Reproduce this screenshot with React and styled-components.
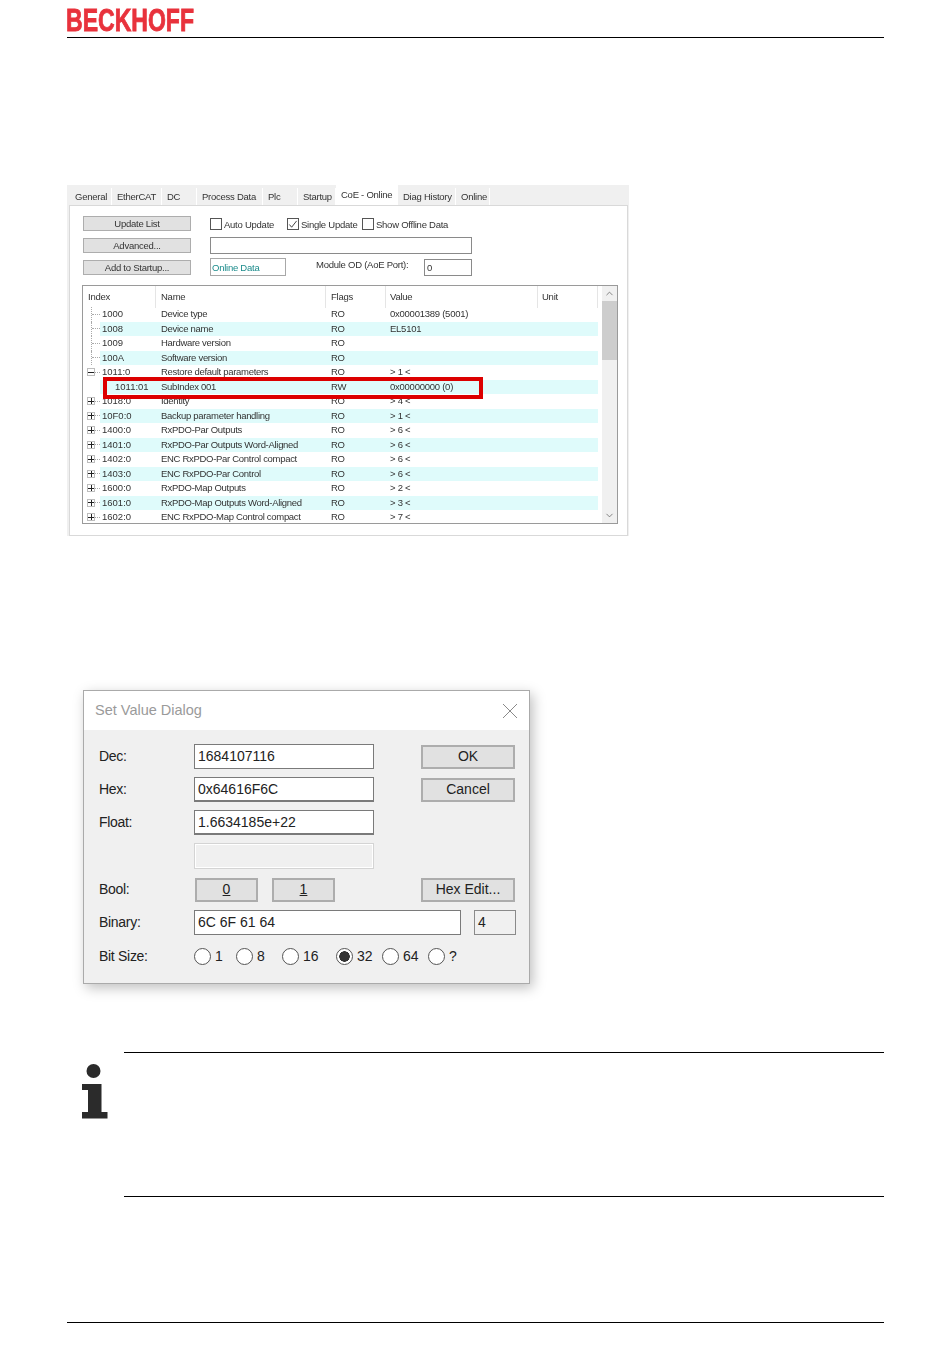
import React from "react";
import styled, { createGlobalStyle } from "styled-components";
import { ChevronUp, ChevronDown } from "lucide-react";

const TABS = [
  { label: "General", width: 42 },
  { label: "EtherCAT", width: 50 },
  { label: "DC", width: 35 },
  { label: "Process Data", width: 66 },
  { label: "Plc", width: 35 },
  { label: "Startup", width: 38 },
  { label: "CoE - Online", width: 62, active: true },
  { label: "Diag History", width: 58 },
  { label: "Online", width: 34 },
];

const OBJECTS = [
  { index: "1000", name: "Device type", flags: "RO", value: "0x00001389 (5001)" },
  { index: "1008", name: "Device name", flags: "RO", value: "EL5101" },
  { index: "1009", name: "Hardware version", flags: "RO", value: "" },
  { index: "100A", name: "Software version", flags: "RO", value: "" },
  { index: "1011:0", name: "Restore default parameters", flags: "RO", value: "> 1 <", node: "minus" },
  { index: "1011:01", name: "SubIndex 001", flags: "RW", value: "0x00000000 (0)", sub: true },
  { index: "1018:0", name: "Identity", flags: "RO", value: "> 4 <", node: "plus" },
  { index: "10F0:0", name: "Backup parameter handling", flags: "RO", value: "> 1 <", node: "plus" },
  { index: "1400:0", name: "RxPDO-Par Outputs", flags: "RO", value: "> 6 <", node: "plus" },
  { index: "1401:0", name: "RxPDO-Par Outputs Word-Aligned", flags: "RO", value: "> 6 <", node: "plus" },
  { index: "1402:0", name: "ENC RxPDO-Par Control compact", flags: "RO", value: "> 6 <", node: "plus" },
  { index: "1403:0", name: "ENC RxPDO-Par Control", flags: "RO", value: "> 6 <", node: "plus" },
  { index: "1600:0", name: "RxPDO-Map Outputs", flags: "RO", value: "> 2 <", node: "plus" },
  { index: "1601:0", name: "RxPDO-Map Outputs Word-Aligned", flags: "RO", value: "> 3 <", node: "plus" },
  { index: "1602:0", name: "ENC RxPDO-Map Control compact", flags: "RO", value: "> 7 <", node: "plus" },
];

const BIT_SIZES = [
  { label: "1", width: 42 },
  { label: "8", width: 46 },
  { label: "16", width: 54 },
  { label: "32", width: 46, checked: true },
  { label: "64", width: 46 },
  { label: "?", width: 30 },
];

const InfoIcon = () => (
  <svg width="26" height="55" viewBox="0 0 26 55" fill="#2b2b2b">
    <circle cx="11.500" cy="7" r="7" />
    <path d="M0 20H19.500V48H25.500V54.500H0V48H6V26H0Z" />
  </svg>
);

const CloseIcon = () => (
  <svg width="16" height="16" viewBox="0 0 16 16" stroke="#8a8a8a" strokeWidth="1" fill="none">
    <path d="M1 1L15 15M15 1L1 15" />
  </svg>
);

const App = () => {
  return (
    <Page>
      <GlobalStyle />
      <Header>
        <Logo>BECKHOFF</Logo>
      </Header>

      <CoePanel>
        <TabStrip>
          {TABS.map((tab) => (
            <Tab key={tab.label} $active={tab.active} $width={tab.width}>
              {tab.label}
            </Tab>
          ))}
        </TabStrip>
        <TabBody>
          <FormGrid>
            <FlatButton>Update List</FlatButton>
            <CheckRow>
              <CheckItem $width={77}>
                <CheckBox />
                Auto Update
              </CheckItem>
              <CheckItem $width={75}>
                <CheckBox>
                  <svg width="11" height="11" viewBox="0 0 11 11" fill="none" stroke="#333" strokeWidth="1">
                    <path d="M1.500 5.500L4 8.500L9.500 1.500" />
                  </svg>
                </CheckBox>
                Single Update
              </CheckItem>
              <CheckItem $width={110}>
                <CheckBox />
                Show Offline Data
              </CheckItem>
            </CheckRow>
            <FlatButton>Advanced...</FlatButton>
            <EditBox />
            <FlatButton>Add to Startup...</FlatButton>
            <DataRow>
              <OnlineData>Online Data</OnlineData>
              <ModuleLabel>Module OD (AoE Port):</ModuleLabel>
              <PortBox>0</PortBox>
            </DataRow>
          </FormGrid>

          <ListBox>
            <ListMain>
              <HeaderRow>
                <HeadCell>Index</HeadCell>
                <HeadCell>Name</HeadCell>
                <HeadCell>Flags</HeadCell>
                <HeadCell>Value</HeadCell>
                <HeadCell>Unit</HeadCell>
              </HeaderRow>
              <RowList>
                {OBJECTS.map((row, i) => (
                  <ObjectRow key={row.index}>
                    <TreeGutter>
                      {row.node ? <NodeBox $open={row.node === "minus"} /> : !row.sub && <TreeStem />}
                      {!row.sub && <TreeDots />}
                    </TreeGutter>
                    <RowBody $striped={i % 2 === 1}>
                      <IndexCell $sub={row.sub}>{row.index}</IndexCell>
                      <span>{row.name}</span>
                      <span>{row.flags}</span>
                      <span>{row.value}</span>
                    </RowBody>
                  </ObjectRow>
                ))}
              </RowList>
            </ListMain>
            <ScrollBar>
              <ScrollArrow>
                <ChevronUp size={11} strokeWidth={1.5} />
              </ScrollArrow>
              <ScrollThumb />
              <ScrollTrack />
              <ScrollArrow>
                <ChevronDown size={11} strokeWidth={1.5} />
              </ScrollArrow>
            </ScrollBar>
            <Highlight />
          </ListBox>
        </TabBody>
      </CoePanel>

      <Dialog>
        <TitleBar>
          <DialogTitle>Set Value Dialog</DialogTitle>
          <CloseIcon />
        </TitleBar>
        <DialogBody>
          <FieldLabel>Dec:</FieldLabel>
          <Field>1684107116</Field>
          <DialogButton>OK</DialogButton>

          <FieldLabel>Hex:</FieldLabel>
          <Field $heavy>0x64616F6C</Field>
          <DialogButton>Cancel</DialogButton>

          <FieldLabel>Float:</FieldLabel>
          <Field $heavy>1.6634185e+22</Field>
          <span />

          <span />
          <DisabledField />
          <span />

          <FieldLabel>Bool:</FieldLabel>
          <BoolGroup>
            <BoolButton>
              <u>0</u>
            </BoolButton>
            <BoolButton>
              <u>1</u>
            </BoolButton>
          </BoolGroup>
          <DialogButton>Hex Edit...</DialogButton>

          <FieldLabel>Binary:</FieldLabel>
          <BinaryGroup>
            <Field>6C 6F 61 64</Field>
            <SizeBox>4</SizeBox>
          </BinaryGroup>

          <FieldLabel>Bit Size:</FieldLabel>
          <RadioRow>
            {BIT_SIZES.map((size) => (
              <RadioItem key={size.label} $width={size.width}>
                <Radio $checked={size.checked} />
                {size.label}
              </RadioItem>
            ))}
          </RadioRow>
        </DialogBody>
      </Dialog>

      <Note>
        <NoteIcon>
          <InfoIcon />
        </NoteIcon>
        <NoteBody />
      </Note>

      <Footer />
    </Page>
  );
};

const GlobalStyle = createGlobalStyle`
  html, body {
    margin: 0;
    background: #fff;
  }
`;

const Page = styled.div`
  width: 950px;
  height: 1369px;
  box-sizing: border-box;
  padding: 0 66px 0 67px;
  overflow: hidden;
  font-family: "Liberation Sans", Arial, sans-serif;
`;

const Header = styled.header`
  height: 37px;
  border-bottom: 1px solid #000;
  overflow: hidden;
`;

const Logo = styled.div`
  display: inline-block;
  margin-left: -1px;
  font-size: 32px;
  line-height: 41px;
  font-weight: 700;
  color: #e8323c;
  -webkit-text-stroke: 0.9px #e8323c;
  transform: scaleX(0.72);
  transform-origin: left center;
`;

const CoePanel = styled.section`
  width: 562px;
  height: 351px;
  margin-top: 147px;
  box-sizing: border-box;
  padding: 0 1px 0 2px;
  background: #f0f0f0;
  display: flex;
  flex-direction: column;
  font-size: 9.500px;
  letter-spacing: -0.25px;
  color: #333;
  filter: blur(0.3px);
`;

const TabStrip = styled.div`
  height: 20px;
  display: flex;
  align-items: flex-end;
  padding-left: 1px;
`;

const Tab = styled.div`
  width: ${(p) => p.$width}px;
  height: ${(p) => (p.$active ? 20 : 17)}px;
  line-height: ${(p) => (p.$active ? 19 : 17)}px;
  padding-left: 5px;
  white-space: nowrap;
  background: ${(p) => (p.$active ? "#fff" : "#f0f0f0")};
  border-right: 1px solid #fff;
  box-sizing: border-box;
`;

const TabBody = styled.div`
  flex: 1;
  background: #fff;
  border: 1px solid #d9d9d9;
  padding: 9px 9px 11px 13px;
  display: flex;
  flex-direction: column;
  gap: 10px;
`;

const FormGrid = styled.div`
  display: grid;
  grid-template-columns: 108px 262px;
  grid-auto-rows: 16px;
  column-gap: 19px;
  row-gap: 6px;
  align-items: center;
`;

const FlatButton = styled.div`
  height: 15px;
  line-height: 14px;
  box-sizing: border-box;
  background: #e1e1e1;
  border: 1px solid #adadad;
  text-align: center;
`;

const CheckRow = styled.div`
  display: flex;
  align-items: center;
  padding-top: 2px;
`;

const CheckItem = styled.div`
  width: ${(p) => p.$width}px;
  display: flex;
  align-items: center;
  gap: 2px;
  white-space: nowrap;
`;

const CheckBox = styled.span`
  width: 12px;
  height: 12px;
  box-sizing: border-box;
  border: 1px solid #555;
  display: inline-flex;
  align-items: center;
  justify-content: center;
  flex: none;
`;

const EditBox = styled.div`
  height: 17px;
  box-sizing: border-box;
  border: 1px solid #8a8a8a;
`;

const DataRow = styled.div`
  display: flex;
  align-items: center;
  height: 18px;
`;

const OnlineData = styled.div`
  width: 76px;
  height: 18px;
  line-height: 17px;
  box-sizing: border-box;
  border: 1px solid #a8a8a8;
  padding-left: 1px;
  color: #1c8c8c;
`;

const ModuleLabel = styled.div`
  margin-left: 30px;
  width: 108px;
  margin-top: -5px;
  white-space: nowrap;
`;

const PortBox = styled.div`
  width: 48px;
  height: 17px;
  line-height: 16px;
  box-sizing: border-box;
  border: 1px solid #8a8a8a;
  padding-left: 2px;
`;

const ListBox = styled.div`
  position: relative;
  width: 536px;
  height: 239px;
  margin-left: -1px;
  box-sizing: border-box;
  border: 1px solid #9a9a9a;
  display: flex;
  overflow: hidden;
`;

const ListMain = styled.div`
  width: 515px;
  flex: none;
  display: flex;
  flex-direction: column;
`;

const HeaderRow = styled.div`
  height: 21px;
  flex: none;
  display: grid;
  grid-template-columns: 73px 170px 60px 152px 60px;
  align-items: stretch;
`;

const HeadCell = styled.div`
  line-height: 22px;
  padding-left: 5px;
  border-right: 1px solid #e5e5e5;
  &:nth-child(n + 4) {
    padding-left: 4px;
  }
`;

const RowList = styled.div`
  flex: 1;
  overflow: hidden;
`;

const ObjectRow = styled.div`
  height: 14.500px;
  display: flex;
`;

const TreeGutter = styled.div`
  width: 17px;
  flex: none;
  display: flex;
  align-items: center;
  padding-left: 4px;
  box-sizing: border-box;
`;

const NodeBox = styled.span`
  width: 8px;
  height: 8px;
  flex: none;
  box-sizing: border-box;
  border: 1px solid #bdbdbd;
  background:
    linear-gradient(#222, #222) center / 6px 1px no-repeat,
    ${(p) => (p.$open ? "none" : "linear-gradient(#222, #222) center / 1px 6px no-repeat")};
`;

const TreeStem = styled.span`
  align-self: stretch;
  margin-left: 4px;
  width: 0;
  border-left: 1px dotted #aaa;
`;

const TreeDots = styled.span`
  flex: 1;
  border-top: 1px dotted #aaa;
`;

const RowBody = styled.div`
  width: 498px;
  display: grid;
  grid-template-columns: 56px 170px 59px 213px;
  align-items: center;
  white-space: nowrap;
  line-height: 14px;
  background: ${(p) => (p.$striped ? "#dffbfb" : "transparent")};
  span:nth-child(n + 2) {
    padding-left: 5px;
  }
  span:nth-child(2) {
    letter-spacing: -0.3px;
  }
`;

const IndexCell = styled.span`
  padding-left: ${(p) => (p.$sub ? 15 : 2)}px;
  letter-spacing: 0;
`;

const ScrollBar = styled.div`
  width: 15px;
  margin-left: 4px;
  flex: none;
  background: #f0f0f0;
  display: flex;
  flex-direction: column;
`;

const ScrollArrow = styled.div`
  height: 15px;
  flex: none;
  display: flex;
  align-items: center;
  justify-content: center;
  color: #555;
`;

const ScrollThumb = styled.div`
  height: 59px;
  flex: none;
  background: #cdcdcd;
`;

const ScrollTrack = styled.div`
  flex: 1;
`;

const Highlight = styled.div`
  position: absolute;
  left: 20px;
  top: 91px;
  width: 380px;
  height: 22px;
  box-sizing: border-box;
  border: 4px solid #dc0000;
`;

const Dialog = styled.section`
  width: 447px;
  margin: 154px 0 0 16px;
  box-sizing: border-box;
  border: 1px solid #aaa;
  background: #f0f0f0;
  box-shadow: 3px 4px 12px rgba(0, 0, 0, 0.25);
  font-size: 14px;
  color: #222;
`;

const TitleBar = styled.div`
  height: 39px;
  background: #fff;
  display: flex;
  align-items: center;
  justify-content: space-between;
  padding: 0 11px;
`;

const DialogTitle = styled.div`
  font-size: 14.500px;
  color: #9a9a9a;
  margin-top: -2px;
`;

const DialogBody = styled.div`
  display: grid;
  grid-template-columns: 95px 180px 141px;
  grid-template-rows: 25px 25px 25px 26px 25px 25px 28px;
  row-gap: 8px;
  padding: 14px 14px 12px 15px;
  align-items: center;
`;

const FieldLabel = styled.div`
  letter-spacing: -0.3px;
  white-space: nowrap;
  padding-bottom: 2px;
`;

const Field = styled.div`
  height: 25px;
  line-height: 23px;
  box-sizing: border-box;
  background: #fff;
  border: 1px solid #7a7a7a;
  border-bottom-width: ${(p) => (p.$heavy ? 2 : 1)}px;
  padding-left: 3px;
  flex: 1;
`;

const DisabledField = styled.div`
  height: 26px;
  box-sizing: border-box;
  background: #f0f0f0;
  border: 1px solid #d4d4d4;
  box-shadow: inset 0 0 0 1px #fff;
`;

const DialogButton = styled.div`
  width: 94px;
  height: 24px;
  line-height: 19px;
  justify-self: end;
  box-sizing: border-box;
  background: #e1e1e1;
  border: 2px solid #adadad;
  text-align: center;
`;

const BoolGroup = styled.div`
  display: flex;
  gap: 14px;
  padding-left: 1px;
`;

const BoolButton = styled(DialogButton)`
  width: 63px;
`;

const BinaryGroup = styled.div`
  grid-column: 2 / span 2;
  display: flex;
  gap: 13px;
  margin-right: -1px;
`;

const SizeBox = styled.div`
  width: 42px;
  height: 25px;
  line-height: 23px;
  box-sizing: border-box;
  border: 1px solid #8a8a8a;
  padding-left: 3px;
`;

const RadioRow = styled.div`
  grid-column: 2 / span 2;
  display: flex;
  padding-bottom: 2px;
`;

const RadioItem = styled.div`
  width: ${(p) => p.$width}px;
  display: flex;
  align-items: center;
  gap: 4px;
`;

const Radio = styled.span`
  width: 17px;
  height: 17px;
  box-sizing: border-box;
  border-radius: 50%;
  border: 1px solid #555;
  background: ${(p) =>
    p.$checked ? "radial-gradient(circle, #333 0 5px, #fff 5.5px)" : "#fff"};
  flex: none;
`;

const Note = styled.section`
  margin-top: 68px;
  display: flex;
`;

const NoteIcon = styled.div`
  width: 57px;
  flex: none;
  padding: 12px 0 0 15px;
  box-sizing: border-box;
`;

const NoteBody = styled.div`
  flex: 1;
  height: 145px;
  box-sizing: border-box;
  border-top: 1px solid #000;
  border-bottom: 1px solid #000;
`;

const Footer = styled.footer`
  margin-top: 125px;
  border-top: 1px solid #000;
`;

export default App;
